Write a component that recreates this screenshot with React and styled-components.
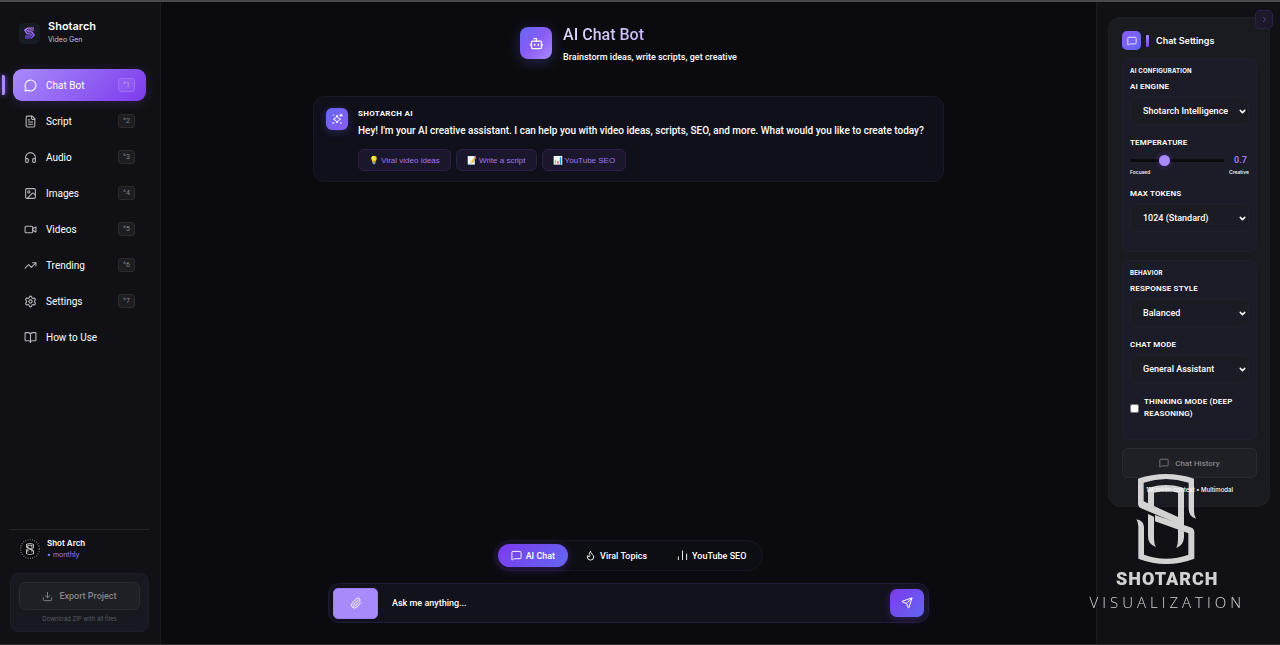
import React, { useState } from 'react'
import styled, { createGlobalStyle, css } from 'styled-components'
import {
  BookOpen,
  Bot,
  ChevronDown,
  ChevronRight,
  Download,
  FileText,
  Flame,
  Headphones,
  Image,
  MessageCircle,
  MessageSquare,
  Paperclip,
  Send,
  Settings,
  TrendingUp,
  Video,
} from 'lucide-react'

const navItems = [
  { label: 'Chat Bot', icon: MessageCircle, hint: '^1' },
  { label: 'Script', icon: FileText, hint: '^2' },
  { label: 'Audio', icon: Headphones, hint: '^3' },
  { label: 'Images', icon: Image, hint: '^4' },
  { label: 'Videos', icon: Video, hint: '^5' },
  { label: 'Trending', icon: TrendingUp, hint: '^6' },
  { label: 'Settings', icon: Settings, hint: '^7' },
  { label: 'How to Use', icon: BookOpen },
]

const BrandMark = () => (
  <svg width="11" height="12" viewBox="0 0 11 12" fill="none" aria-hidden="true">
    <defs>
      <linearGradient id="brand" x1="0" y1="0" x2="0" y2="12" gradientUnits="userSpaceOnUse">
        <stop offset="0" stopColor="#c58af0" />
        <stop offset="1" stopColor="#6d4df0" />
      </linearGradient>
    </defs>
    <path d="M10 2H4L2 3.4 3.6 5.8H7.4L9 8 7.2 10H1" stroke="url(#brand)" strokeWidth="3.2" />
    <path d="M10 2H4L2.4 3.6 3.8 5.8H7.2L8.6 8 7 10H1" stroke="#221d45" strokeWidth="0.9" />
  </svg>
)

const MonogramPaths = () => (
  <>
    <path d="M27 32Q111 4 195 32V128Q195 144 201 152Q179 146 179 122V44Q111 22 44 44V100L147 147V167L36 121Q27 117 27 106Z" />
    <path d="M57 112V66Q57 60 64 58Q111 44 158 58Q165 60 165 66V182L147 175V74Q111 64 75 74V120Z" />
    <path d="M57 138L75 146V212Q75 228 81 237Q57 230 57 204Z" />
    <path d="M165 190V208Q164 232 142 240Q147 230 147 214V184Z" />
    <path d="M78 141L184 178Q196 182 196 192V272Q112 304 28 272V176Q28 162 22 154Q45 158 45 178V260Q112 284 178 260V196L78 160Z" />
  </>
)

const BarsIcon = () => (
  <svg width="11" height="11" viewBox="0 0 24 24" fill="none" stroke="currentColor" strokeWidth="2" strokeLinecap="round" aria-hidden="true">
    <path d="M3 21v-6M12 21V2M21 21V9" />
  </svg>
)

const SparkIcon = () => (
  <svg width="12" height="12" viewBox="0 0 24 24" fill="none" stroke="currentColor" strokeWidth="2" strokeLinecap="round" strokeLinejoin="round" aria-hidden="true">
    <path d="M12 5q1 6 7 7.500q-6 1.500-7 7.500q-1-6-7-7.500q6-1.500 7-7.500Z" />
    <path d="M20 2v5M17.500 4.500h5M20 19v2M3 20h3M5 4v1" />
  </svg>
)

const SelectField = ({ id, label, value }) => (
  <Field>
    <Label htmlFor={id}>{label}</Label>
    <SelectBox>
      <select id={id}>
        <option>{value}</option>
      </select>
      <ChevronDown size={9} strokeWidth={4} />
    </SelectBox>
  </Field>
)

const App = () => {
  const [page, setPage] = useState('Chat Bot')
  const [temperature, setTemperature] = useState(0.7)

  return (
    <Shell>
      <GlobalStyle />
      <Sidebar>
        <Brand>
          <BrandTile>
            <BrandMark />
          </BrandTile>
          <div>
            <BrandName>Shotarch</BrandName>
            <BrandNote>Video Gen</BrandNote>
          </div>
        </Brand>
        <Nav>
          {navItems.map(({ label, icon: Icon, hint }) => (
            <NavButton key={label} $active={page === label} onClick={() => setPage(label)}>
              <Icon size={13} />
              <span>{label}</span>
              {hint && <Hint $active={page === label}>{hint}</Hint>}
            </NavButton>
          ))}
        </Nav>
        <Account>
          <Avatar viewBox="0 0 22 22" aria-hidden="true">
            <circle cx="11" cy="11" r="11" fill="#08080a" />
            <circle cx="11" cy="11" r="9.4" fill="none" stroke="#6c6c70" strokeWidth="1.6" strokeDasharray="1 1.3" />
            <g transform="translate(5.8 4.6) scale(0.046 0.042)" fill="#e8e8e8">
              <MonogramPaths />
            </g>
          </Avatar>
          <div>
            <AccountName>Shot Arch</AccountName>
            <AccountPlan>• monthly</AccountPlan>
          </div>
        </Account>
        <ExportBox>
          <MutedButton $size="28px">
            <Download size={11} />
            Export Project
          </MutedButton>
          <ExportNote>Download ZIP with all files</ExportNote>
        </ExportBox>
      </Sidebar>

      <Main>
        <PageHead>
          <PageIcon>
            <Bot size={15} />
          </PageIcon>
          <div>
            <Title>AI Chat Bot</Title>
            <Subtitle>Brainstorm ideas, write scripts, get creative</Subtitle>
          </div>
        </PageHead>

        <Message>
          <MessageIcon>
            <SparkIcon />
          </MessageIcon>
          <div>
            <Sender>SHOTARCH AI</Sender>
            <MessageText>
              Hey! I'm your AI creative assistant. I can help you with video ideas, scripts, SEO, and more. What
              would you like to create today?
            </MessageText>
            <Chips>
              <Chip>💡 Viral video ideas</Chip>
              <Chip>📝 Write a script</Chip>
              <Chip>📊 YouTube SEO</Chip>
            </Chips>
          </div>
        </Message>

        <Modes>
          <Mode $active>
            <MessageSquare size={11} />
            AI Chat
          </Mode>
          <Mode>
            <Flame size={11} />
            Viral Topics
          </Mode>
          <Mode>
            <BarsIcon />
            YouTube SEO
          </Mode>
        </Modes>

        <Composer onSubmit={(e) => e.preventDefault()}>
          <AttachButton type="button" aria-label="Attach">
            <Paperclip size={12} />
          </AttachButton>
          <Prompt aria-label="Message" placeholder="Ask me anything..." />
          <SendButton aria-label="Send">
            <Send size={12} />
          </SendButton>
        </Composer>
      </Main>

      <Aside>
        <Panel>
          <PanelHead>
            <PanelIcon>
              <MessageSquare size={10} />
            </PanelIcon>
            <PanelTitle>Chat Settings</PanelTitle>
          </PanelHead>

          <Group>
            <GroupTitle>AI CONFIGURATION</GroupTitle>
            <SelectField id="engine" label="AI ENGINE" value="Shotarch Intelligence" />
            <Field>
              <Label htmlFor="temperature">TEMPERATURE</Label>
              <RangeRow>
                <Range
                  id="temperature"
                  type="range"
                  min="0"
                  max="2"
                  step="0.1"
                  value={temperature}
                  onChange={(e) => setTemperature(e.target.value)}
                />
                <output htmlFor="temperature">{temperature}</output>
              </RangeRow>
              <RangeEnds>
                <span>Focused</span>
                <span>Creative</span>
              </RangeEnds>
            </Field>
            <SelectField id="tokens" label="MAX TOKENS" value="1024 (Standard)" />
          </Group>

          <Group>
            <GroupTitle>BEHAVIOR</GroupTitle>
            <SelectField id="style" label="RESPONSE STYLE" value="Balanced" />
            <SelectField id="mode" label="CHAT MODE" value="General Assistant" />
            <CheckRow>
              <input id="thinking" type="checkbox" />
              <Label htmlFor="thinking">THINKING MODE (DEEP REASONING)</Label>
            </CheckRow>
          </Group>

          <HistoryButton $size="30px">
            <MessageSquare size={10} />
            Chat History
          </HistoryButton>
          <PanelNote>1M token context • Multimodal</PanelNote>
        </Panel>
        <Collapse aria-label="Collapse panel">
          <ChevronRight size={9} />
        </Collapse>
        <Watermark>
          <svg width="76" height="102" viewBox="0 0 228 306" fill="currentColor" aria-hidden="true">
            <MonogramPaths />
          </svg>
          <strong>SHOTARCH</strong>
          <span>VISUALIZATION</span>
        </Watermark>
      </Aside>
    </Shell>
  )
}

const GlobalStyle = createGlobalStyle`
  * {
    box-sizing: border-box;
  }
  body {
    margin: 0;
    background: #0b0b0f;
    color: #fff;
    font-family: Roboto, 'Liberation Sans', sans-serif;
    font-size: 9px;
  }
  h1, h2, h3, p {
    margin: 0;
  }
  button, input, select {
    margin: 0;
    font-family: inherit;
    font-size: 9px;
    font-weight: 500;
    color: inherit;
  }
  button {
    cursor: pointer;
  }
  svg {
    flex-shrink: 0;
  }
`

const Shell = styled.div`
  display: grid;
  grid-template-columns: 161px 1fr 184px;
  min-height: 100vh;
  border-top: 2px solid #48484a;
  border-bottom: 1px solid #2b2b30;
`

const Sidebar = styled.aside`
  display: flex;
  flex-direction: column;
  padding: 18px 11px 12px 10px;
  background: #111115;
  border-right: 1px solid #1b1b20;
`

const Brand = styled.div`
  display: flex;
  align-items: center;
  gap: 8px;
  padding-left: 9px;
`

const BrandTile = styled.div`
  display: flex;
  align-items: center;
  justify-content: center;
  width: 21px;
  height: 21px;
  border-radius: 5px;
  background: #171b22;
`

const BrandName = styled.h2`
  font-family: Inter, sans-serif;
  font-size: 11px;
  line-height: 13px;
  font-weight: 600;
`

const BrandNote = styled.p`
  font-family: Inter, sans-serif;
  font-size: 7px;
  line-height: 13px;
  color: #c4c4ca;
`

const Nav = styled.nav`
  display: flex;
  flex-direction: column;
  gap: 4px;
  margin-top: 23px;
  padding: 0 3px;
`

const NavButton = styled.button`
  position: relative;
  display: flex;
  align-items: center;
  gap: 9px;
  height: 32px;
  padding: 0 11px;
  border: 0;
  border-radius: 9px;
  background: none;
  font-size: 10px;
  font-weight: 400;
  text-align: left;

  svg {
    color: #b4b4ba;
  }

  ${({ $active }) =>
    $active &&
    css`
      background: linear-gradient(135deg, #a78bfa, #7c3aed);
      box-shadow: 0 2px 12px rgba(139, 92, 246, 0.2);

      svg {
        color: #fff;
      }
      &::before {
        content: '';
        position: absolute;
        left: -11px;
        top: 6px;
        width: 3px;
        height: 20px;
        border-radius: 0 2px 2px 0;
        background: #a78bfa;
        box-shadow: 0 0 5px #8b5cf6;
      }
    `}
`

const Hint = styled.kbd`
  margin-left: auto;
  width: 17px;
  border: 1px solid ${({ $active }) => ($active ? '#9d70f4' : '#2a2a2f')};
  border-radius: 3px;
  background: ${({ $active }) => ($active ? 'rgba(255, 255, 255, 0.08)' : '#1c1c21')};
  color: ${({ $active }) => ($active ? '#c5a6fa' : '#85858c')};
  font-family: inherit;
  font-size: 7px;
  line-height: 12px;
  text-align: center;
`

const Account = styled.div`
  display: flex;
  align-items: center;
  gap: 6px;
  margin-top: auto;
  padding: 8px 9px 13px;
  border-top: 1px solid #222228;
`

const Avatar = styled.svg`
  width: 22px;
  height: 22px;
`

const AccountName = styled.p`
  font-family: Inter, sans-serif;
  font-size: 8px;
  line-height: 11px;
  font-weight: 600;
`

const AccountPlan = styled.p`
  font-family: Inter, sans-serif;
  font-size: 7px;
  line-height: 11px;
  color: #a078f5;
`

const ExportBox = styled.div`
  padding: 8px;
  border: 1px solid #1e1e29;
  border-radius: 8px;
  background: #181820;
`

const MutedButton = styled.button`
  display: flex;
  align-items: center;
  justify-content: center;
  gap: 6px;
  width: 100%;
  height: ${({ $size }) => $size};
  border: 1px solid #2a2a2f;
  border-radius: 6px;
  background: #1f1f26;
  color: #85858b;
`

const HistoryButton = styled(MutedButton)`
  font-size: 8px;
`

const ExportNote = styled.p`
  margin-top: 4px;
  font-family: Inter, sans-serif;
  font-size: 6px;
  line-height: 9px;
  text-align: center;
  color: #5c5c62;
`

const Main = styled.main`
  display: flex;
  flex-direction: column;
  align-items: center;
  padding: 22px 16px 21px;
`

const PageHead = styled.header`
  display: flex;
  align-items: flex-start;
  gap: 11px;
`

const PageIcon = styled.div`
  display: flex;
  align-items: center;
  justify-content: center;
  width: 32px;
  height: 32px;
  margin-top: 3px;
  border-radius: 8px;
  background: linear-gradient(135deg, #6366f1, #8b5cf6 50%, #a78bfa);
  box-shadow: 0 3px 14px rgba(99, 102, 241, 0.3);
`

const Title = styled.h1`
  font-size: 16px;
  line-height: 22px;
  font-weight: 500;
  color: transparent;
  background: linear-gradient(135deg, #e4defa, #a78bfa);
  background-clip: text;
`

const Subtitle = styled.p`
  font-size: 9px;
  line-height: 22px;
  font-weight: 500;
`

const Message = styled.section`
  display: flex;
  gap: 10px;
  width: 100%;
  max-width: 631px;
  margin-top: 28px;
  padding: 11px 12px 10px;
  border: 1px solid #191824;
  border-radius: 11px;
  background: #10101a;
`

const MessageIcon = styled.div`
  display: flex;
  align-items: center;
  justify-content: center;
  flex-shrink: 0;
  width: 22px;
  height: 22px;
  border-radius: 6px;
  background: linear-gradient(135deg, #6366f1, #8b5cf6);
  box-shadow: 0 2px 9px rgba(99, 102, 241, 0.3);
`

const Sender = styled.h3`
  font-size: 8px;
  line-height: 12px;
  font-weight: 700;
  letter-spacing: 0.04em;
`

const MessageText = styled.p`
  font-size: 10px;
  line-height: 22px;
  font-weight: 500;
`

const Chips = styled.div`
  display: flex;
  gap: 5px;
  margin-top: 7px;
`

const Chip = styled.button`
  height: 22px;
  padding: 0 10px;
  border: 1px solid #2b2148;
  border-radius: 6px;
  background: #1a162c;
  color: #a078f5;
  font-family: 'Liberation Sans', sans-serif;
  font-size: 8px;
  font-weight: 400;
`

const Modes = styled.div`
  display: flex;
  gap: 4px;
  margin-top: auto;
  padding: 3px;
  border: 1px solid #171624;
  border-radius: 16px;
  background: #0d0e13;
`

const Mode = styled.button`
  display: flex;
  align-items: center;
  gap: 4px;
  height: 23px;
  padding: 0 13px;
  border: 0;
  border-radius: 12px;
  background: none;

  ${({ $active }) =>
    $active &&
    css`
      background: linear-gradient(135deg, #7c3aed, #6366f1);
      box-shadow: 0 2px 10px rgba(124, 58, 237, 0.35);
    `}
`

const Composer = styled.form`
  display: flex;
  align-items: center;
  width: 100%;
  max-width: 601px;
  height: 40px;
  margin-top: 12px;
  padding: 0 4px;
  border: 1px solid #211b3b;
  border-radius: 11px;
  background: #12121c;
`

const AttachButton = styled.button`
  display: flex;
  align-items: center;
  justify-content: center;
  width: 45px;
  height: 31px;
  border: 1px solid #9a7cf5;
  border-radius: 5px;
  background: #a78bfa;
`

const Prompt = styled.input`
  flex: 1;
  min-width: 0;
  padding: 0 14px;
  border: 0;
  outline: 0;
  background: none;

  &::placeholder {
    color: #fff;
  }
`

const SendButton = styled.button`
  display: flex;
  align-items: center;
  justify-content: center;
  width: 34px;
  height: 28px;
  border: 0;
  border-radius: 7px;
  background: linear-gradient(135deg, #7c3aed, #6366f1);
  box-shadow: 0 2px 8px rgba(124, 58, 237, 0.3);
`

const Aside = styled.aside`
  position: relative;
  padding: 15px 10px 0 11px;
  border-left: 1px solid #1b1b20;
  background: #111115;
`

const Panel = styled.section`
  display: flex;
  flex-direction: column;
  gap: 8px;
  padding: 13px 12px 12px 13px;
  border: 1px solid #1e1e26;
  border-radius: 12px;
  background: #1a1a21;
`

const PanelHead = styled.div`
  display: flex;
  align-items: center;
  gap: 5px;
`

const PanelIcon = styled.div`
  display: flex;
  align-items: center;
  justify-content: center;
  width: 19px;
  height: 19px;
  border-radius: 5px;
  background: linear-gradient(135deg, #8b5cf6, #6366f1);
`

const PanelTitle = styled.h2`
  display: flex;
  align-items: center;
  gap: 7px;
  font-family: Inter, sans-serif;
  font-size: 9px;
  line-height: 12px;
  font-weight: 600;

  &::before {
    content: '';
    width: 3px;
    height: 12px;
    border-radius: 1px;
    background: linear-gradient(#a78bfa, #7c3aed);
  }
`

const Group = styled.div`
  display: flex;
  flex-direction: column;
  gap: 12px;
  padding: 6px 7px 19px;
  border: 1px solid #201f30;
  border-radius: 7px;
  background: #1c1b28;
`

const GroupTitle = styled.h3`
  margin-bottom: -7px;
  font-family: Inter, sans-serif;
  font-size: 6px;
  line-height: 11px;
  font-weight: 700;
  letter-spacing: 0.04em;
`

const Field = styled.div`
  display: flex;
  flex-direction: column;
`

const Label = styled.label`
  font-size: 8px;
  line-height: 12px;
  font-weight: 600;
  letter-spacing: 0.02em;
`

const SelectBox = styled.div`
  display: grid;
  align-items: center;
  margin-top: 4px;

  select,
  svg {
    grid-area: 1 / 1;
  }
  select {
    width: 100%;
    height: 28px;
    padding: 0 12px;
    border: 1px solid #20202a;
    border-radius: 6px;
    appearance: none;
    background: #1b1b23;
  }
  svg {
    justify-self: end;
    margin-right: 2px;
    pointer-events: none;
  }
`

const RangeRow = styled.div`
  display: flex;
  align-items: center;
  gap: 10px;
  height: 16px;
  margin-top: 3px;
  color: #a078f5;
  font-weight: 600;

  output {
    width: 15px;
  }
`

const Range = styled.input`
  flex: 1;
  min-width: 0;
  height: 11px;
  appearance: none;
  background: none;

  &::-webkit-slider-runnable-track {
    height: 3px;
    border-radius: 2px;
    background: #0a0a0f;
  }
  &::-webkit-slider-thumb {
    appearance: none;
    width: 11px;
    height: 11px;
    margin-top: -4px;
    border-radius: 50%;
    background: #a78bfa;
    box-shadow: 0 0 6px rgba(139, 92, 246, 0.4);
  }
`

const RangeEnds = styled.div`
  display: flex;
  justify-content: space-between;
  font-family: Inter, sans-serif;
  font-size: 5px;
  line-height: 8px;
  font-weight: 500;
`

const CheckRow = styled.div`
  display: flex;
  align-items: center;
  gap: 5px;
  margin-top: 1px;

  input {
    flex-shrink: 0;
    width: 9px;
    height: 9px;
  }
`

const PanelNote = styled.p`
  font-family: Inter, sans-serif;
  font-size: 6px;
  line-height: 8px;
  font-weight: 500;
  text-align: center;
`

const Collapse = styled.button`
  position: absolute;
  top: 8px;
  right: 7px;
  display: flex;
  align-items: center;
  justify-content: center;
  width: 18px;
  height: 19px;
  padding: 0;
  border: 1px solid #2b2148;
  border-radius: 5px;
  background: #1c1729;
  color: #7458b5;
`

const Watermark = styled.div`
  position: absolute;
  right: 35px;
  bottom: 28px;
  display: flex;
  flex-direction: column;
  align-items: center;
  color: #f4f4f4;
  opacity: 0.85;
  pointer-events: none;

  strong {
    font-family: Roboto, sans-serif;
    font-size: 18px;
    line-height: 18px;
    font-weight: 900;
    letter-spacing: 1px;
  }
  span {
    font-family: 'Open Sans', sans-serif;
    font-size: 15px;
    line-height: 28px;
    font-weight: 300;
    letter-spacing: 4px;
  }
`

export default App
